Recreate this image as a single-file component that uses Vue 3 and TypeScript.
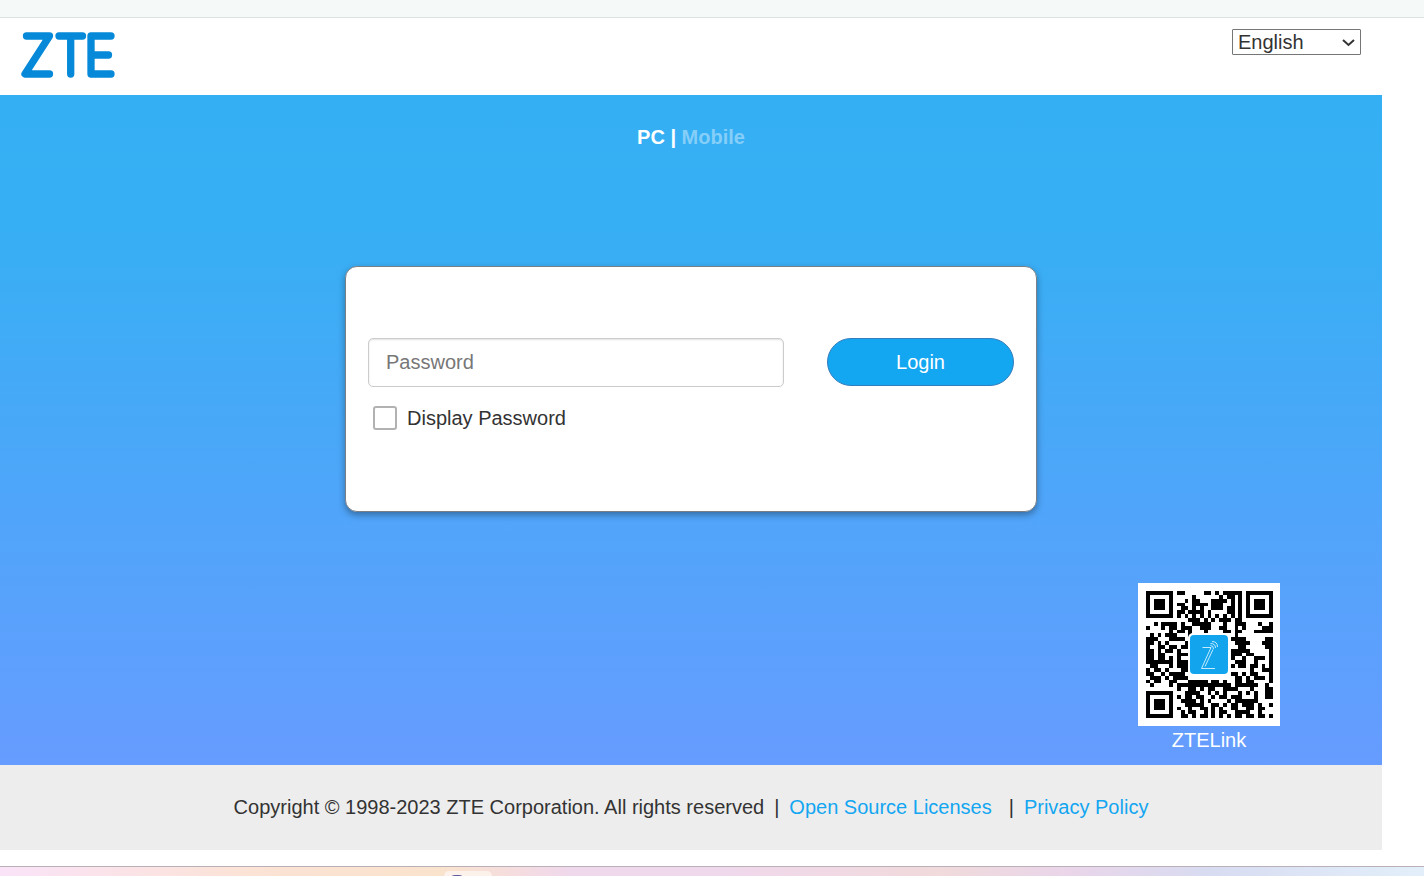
<script setup lang="ts">
import { computed, ref } from 'vue'

const language = ref<string>('English')
const languages: string[] = ['English', 'Français', 'Deutsch', 'Español']
const password = ref<string>('')
const displayPassword = ref<boolean>(false)

const codeRows: string[] = [
  '#######.##.....##.#.#####.#######',
  '#.....#.....#......#.##.#.#.....#',
  '#.###.#...#.##...####.#.#.#.###.#',
  '#.###.#.##..####.###..#.#.#.###.#',
  '#.###.#..##.#.#..###.##.#.#.###.#',
  '#.....#.##.####.#....##.#.#.....#',
  '#######.#.#.#.#.#.#.#.#.#.#######',
  '...........###.#.#.###.##........',
  '..#.####.#..#####...#..###...#..#',
  '#...#.##.###..###..##..#.#....###',
  '......#.##.#...#....##.##...#####',
  '.#.#.###...#...........#.........',
  '###...####............####.....##',
  '##.#.#....#............####...###',
  '#..##.##.##.............##.....##',
  '##.#.##.#.............#####.....#',
  '##.##...###...........###.##....#',
  '##.##.#.#.............#..#..###.#',
  '#######.###............###..#...#',
  '.##...#.###...........#.##.##.#.#',
  '#.##.#...##................#..###',
  '##..#.####............##.#.##...#',
  '.###.#.####............##.#.###.#',
  '#.##..##...#####.##.#..##.##....#',
  '.#....#.##############.######..#.',
  '........#..##.#.##..####...#...##',
  '#######...####..#.#.#...#.#.#..##',
  '#.....#.#.##.##..#.##.###...#..##',
  '#.###.#..####.#.#....#.######....',
  '#.###.#...#####..##.#.##.###.#..#',
  '#.###.#.#..#..##.#.#..##..##.##..',
  '#.....#..#.##..#.#.##..####..#...',
  '#######..##.#.##.#.#.#.##.##.##.#',
]

const codePath = computed<string>(() =>
  codeRows
    .flatMap((row, y) =>
      [...row].map((cell, x) => (cell === '#' ? `M${x} ${y}h1v1h-1z` : '')),
    )
    .join(''),
)
</script>

<template>
  <div class="window">
    <div class="top-strip"></div>
    <div class="page">
      <header class="header">
        <svg class="logo" viewBox="0 0 96 48" role="img" aria-label="ZTE">
          <g fill="none" stroke="#0589d8" stroke-width="7.300" stroke-linecap="round" stroke-linejoin="round">
            <path d="M6.500 5H29.500L5 43H29.500" />
            <path d="M39 5H62.500M50.700 5V43" />
            <path d="M91 5H71V43H91M71 24H88.500" />
          </g>
          <path d="M22 5H29L24 14ZM13 43H5L11 34ZM71 5H76L72 10ZM71 43H76L72 38Z" fill="#0589d8" />
        </svg>
        <div class="language-box">
          <select v-model="language" class="language" aria-label="Language">
            <option v-for="item in languages" :key="item">{{ item }}</option>
          </select>
          <svg class="chevron" viewBox="0 0 13 8" aria-hidden="true">
            <path d="M1 1L6.500 6L12 1" fill="none" stroke="#333" stroke-width="2" />
          </svg>
        </div>
      </header>

      <main class="hero">
        <nav class="modes">
          <a href="#pc" class="mode">PC</a> | <a href="#mobile" class="mode mode-off">Mobile</a>
        </nav>
        <form class="card" @submit.prevent>
          <div class="row">
            <input
              v-model="password"
              class="password"
              :type="displayPassword ? 'text' : 'password'"
              placeholder="Password"
              aria-label="Password"
            />
            <button class="login" type="submit">Login</button>
          </div>
          <label class="display">
            <input v-model="displayPassword" class="tick" type="checkbox" />
            <span>Display Password</span>
          </label>
        </form>
        <figure class="app-code">
          <svg class="code" viewBox="0 0 142 143" aria-hidden="true">
            <rect width="142" height="143" fill="#fff" />
            <path :d="codePath" transform="translate(8 8) scale(3.850)" shape-rendering="crispEdges" />
            <rect x="50" y="50" width="42" height="43" rx="5" fill="#fff" />
            <rect x="52" y="52" width="38" height="39" rx="4" fill="#12a5ee" />
            <g fill="none" stroke="#c4eaff" stroke-width="1">
              <path d="M64.500 64.500H73L63.500 85.500H77M75 66.500L67 83.500" />
              <path d="M72.500 62.500Q75.500 62.500 75.500 66M72.500 60.500Q77.500 60.500 77.500 65M74 58.500Q79.500 58.500 79.500 64" />
            </g>
          </svg>
          <figcaption>ZTELink</figcaption>
        </figure>
      </main>

      <footer class="footer">
        <span>Copyright © 1998-2023 ZTE Corporation. All rights reserved</span>
        <span class="bar">|</span>
        <a href="#licenses">Open Source Licenses</a>
        <span class="bar bar-wide">|</span>
        <a href="#privacy">Privacy Policy</a>
      </footer>
    </div>
    <div class="taskbar"><div class="task"><i class="task-icon"></i></div></div>
  </div>
</template>

<style>
body {
  margin: 0;
}
</style>

<style scoped>
.window {
  display: flex;
  flex-direction: column;
  min-height: 100vh;
  overflow: hidden;
  background: #fff;
  color: #333;
  font-family: 'Liberation Sans', Arial, sans-serif;
  font-size: 20px;
  line-height: 28px;
}
.window * {
  box-sizing: border-box;
}
.top-strip {
  height: 18px;
  background: #f5faf8;
  border-bottom: 1px solid #dbe3e1;
}
.page {
  margin-right: 42px;
  flex: 1;
}
.header {
  display: flex;
  justify-content: space-between;
  align-items: flex-start;
  height: 77px;
  padding: 11px 21px 0 20px;
}
.logo {
  width: 96px;
  height: 48px;
  margin-top: 2px;
}
.language-box {
  position: relative;
}
.language {
  display: block;
  appearance: none;
  width: 129px;
  height: 26px;
  padding: 0 20px 0 5px;
  border: 1px solid #767676;
  border-radius: 1px;
  background: #fff;
  color: #333;
  font: inherit;
  line-height: 24px;
}
.chevron {
  position: absolute;
  top: 10px;
  right: 6px;
  width: 13px;
  height: 8px;
  pointer-events: none;
}
.hero {
  display: flex;
  flex-direction: column;
  align-items: center;
  min-height: 670px;
  padding: 28px 102px 0;
  background: linear-gradient(#35aff3 0%, #37aff4 20%, #669cff 100%);
  color: #fff;
}
.modes {
  font-weight: bold;
}
.mode {
  color: #fff;
  text-decoration: none;
}
.mode-off {
  color: #85cef8;
}
.card {
  width: 50vw;
  max-width: 692px;
  height: 246px;
  margin-top: 115px;
  padding: 71px 22px 0;
  border: 1px solid #7b8086;
  border-radius: 12px;
  background: #fff;
  box-shadow: 0 3px 7px rgba(0, 0, 0, 0.35);
  color: #333;
}
.row {
  display: flex;
  gap: 43px;
}
.password {
  flex: 1;
  min-width: 0;
  height: 49px;
  padding: 0 17px;
  border: 1px solid #ccc;
  border-radius: 5px;
  box-shadow: inset 0 1px 2px rgba(0, 0, 0, 0.12);
  color: #333;
  font: inherit;
}
.password::placeholder {
  color: #777;
}
.login {
  width: 187px;
  height: 48px;
  padding: 0;
  border: 1px solid #357ebd;
  border-radius: 24px;
  background: #13a6f1;
  color: #fff;
  font: inherit;
}
.display {
  display: flex;
  align-items: center;
  width: fit-content;
  gap: 10px;
  margin: 17px 0 0 5px;
}
.tick {
  appearance: none;
  width: 24px;
  height: 24px;
  margin: 0;
  border: 2px solid #b2b2b2;
  border-radius: 3px;
  background: #fff;
}
.tick:checked {
  background: #13a6f1;
}
.app-code {
  align-self: flex-end;
  width: 142px;
  margin: 71px 0 0;
  text-align: center;
}
.code {
  display: block;
  width: 142px;
  height: 143px;
}
.footer {
  display: flex;
  align-items: center;
  justify-content: center;
  gap: 10px;
  height: 85px;
  padding-bottom: 2px;
  background: #ededed;
}
.footer a {
  color: #13a6f1;
  text-decoration: none;
}
.bar-wide {
  margin-left: 7px;
}
.taskbar {
  height: 10px;
  padding: 4px 0 0 444px;
  border-top: 1px solid #b9b0b8;
  overflow: hidden;
  background: linear-gradient(90deg, #fae3f8 0%, #fbe3d5 18%, #fae3cd 31%, #f0d8ec 40%, #f0d8ec 51%, #f0dadb 66%, #ead5ea 75%, #d8dcf1 85%, #e2effa 100%);
}
.task {
  display: flex;
  justify-content: center;
  width: 48px;
  height: 12px;
  padding-right: 22px;
  border-radius: 5px;
  background: #fdf1ec;
}
.task-icon {
  width: 16px;
  height: 12px;
  margin-top: 4px;
  border-radius: 8px;
  background: #5c5d9e;
}
</style>
